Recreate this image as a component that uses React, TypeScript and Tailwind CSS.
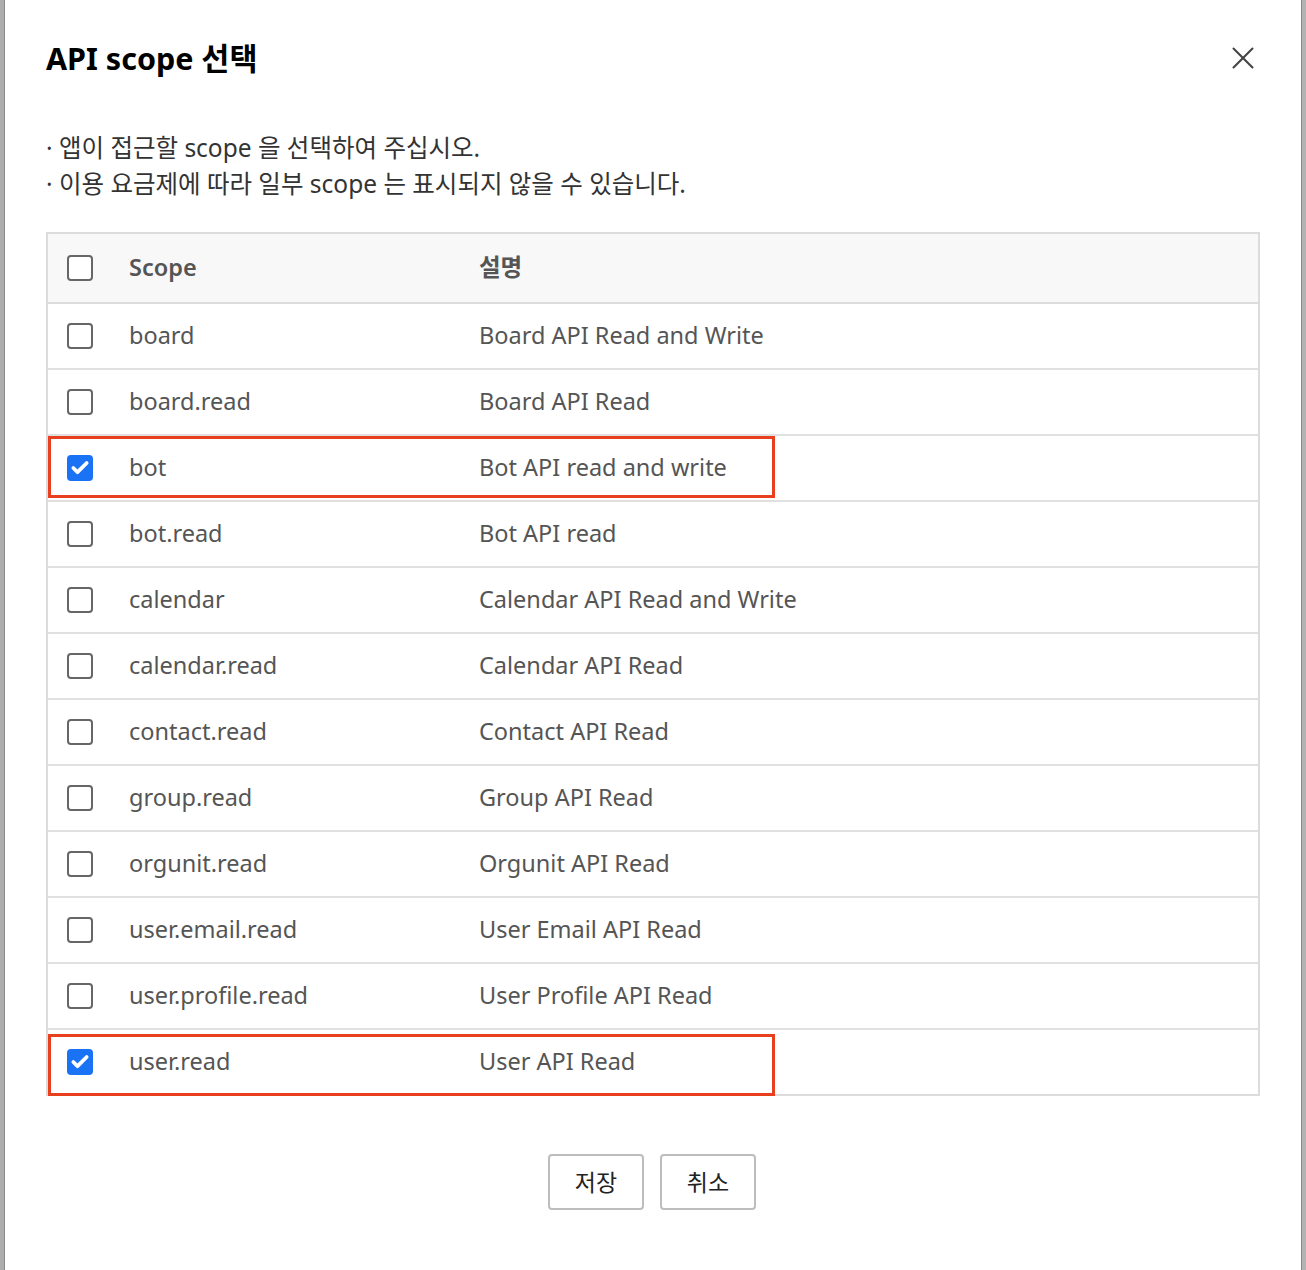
import { X, Check } from "lucide-react"

const scopes = [
  { name: "board", desc: "Board API Read and Write", checked: false },
  { name: "board.read", desc: "Board API Read", checked: false },
  { name: "bot", desc: "Bot API read and write", checked: true },
  { name: "bot.read", desc: "Bot API read", checked: false },
  { name: "calendar", desc: "Calendar API Read and Write", checked: false },
  { name: "calendar.read", desc: "Calendar API Read", checked: false },
  { name: "contact.read", desc: "Contact API Read", checked: false },
  { name: "group.read", desc: "Group API Read", checked: false },
  { name: "orgunit.read", desc: "Orgunit API Read", checked: false },
  { name: "user.email.read", desc: "User Email API Read", checked: false },
  { name: "user.profile.read", desc: "User Profile API Read", checked: false },
  { name: "user.read", desc: "User API Read", checked: true },
]

function Box({ checked }: { checked: boolean }) {
  if (checked) {
    return (
      <div className="flex h-[26px] w-[26px] items-center justify-center rounded-[4px] bg-[#1a73f5]">
        <Check className="h-[20px] w-[20px] text-white" strokeWidth={4.5} />
      </div>
    )
  }
  return <div className="h-[26px] w-[26px] rounded-[4px] border-2 border-[#666] bg-white" />
}

export default function App() {
  return (
    <div
      className="flex h-[1270px] w-[1306px] bg-white"
      style={{ fontFamily: '"Noto Sans", "Noto Sans CJK KR", sans-serif' }}
    >
      {/* left backdrop strip */}
      <div className="w-[4px] shrink-0 bg-[#adadad]" />
      <div className="w-px shrink-0 bg-[#8a8a8a]" />

      {/* modal */}
      <div className="flex-1 px-[41px] pt-[34px]">
        <div className="flex items-start justify-between">
          <h1 className="text-[30.5px] font-bold leading-[48px] text-black">API scope 선택</h1>
          <button className="mr-[-2px] mt-[5px] text-[#444]">
            <X className="h-[38px] w-[38px]" strokeWidth={1.3} />
          </button>
        </div>

        <ul className="mt-[48px] text-[24.5px] leading-[36px] text-[#333]">
          <li>· 앱이 접근할 scope 을 선택하여 주십시오.</li>
          <li>· 이용 요금제에 따라 일부 scope 는 표시되지 않을 수 있습니다.</li>
        </ul>

        <div className="mt-[30px] w-[1214px] border-2 border-[#dcdcdc]">
          <div className="flex h-[70px] items-center border-b-2 border-[#dcdcdc] bg-[#f8f8f8] text-[23.5px] font-semibold text-[#555]">
            <div className="w-[81px] pl-[19px]">
              <Box checked={false} />
            </div>
            <div className="w-[350px]">Scope</div>
            <div>설명</div>
          </div>
          {scopes.map((s, i) => {
            const last = i === scopes.length - 1
            return (
              <div
                key={s.name}
                className={
                  "relative flex items-center text-[23.5px] text-[#555] " +
                  (last ? "h-[64px]" : "h-[66px] border-b-2 border-[#e0e0e0]")
                }
              >
                <div className="w-[81px] pl-[19px]">
                  <Box checked={s.checked} />
                </div>
                <div className="w-[350px]">{s.name}</div>
                <div>{s.desc}</div>
                {s.checked && (
                  <div
                    className={
                      "absolute left-0 h-[62px] w-[727px] border-[3px] border-[#e8401f] " +
                      (last ? "top-[4px]" : "top-0")
                    }
                  />
                )}
              </div>
            )
          })}
        </div>

        <div className="mt-[58px] flex justify-center gap-4 pr-[2px]">
          <button className="h-[56px] w-[96px] rounded-[4px] border-2 border-[#bdbdbd] bg-white text-[23px] text-[#222]">
            저장
          </button>
          <button className="h-[56px] w-[96px] rounded-[4px] border-2 border-[#bdbdbd] bg-white text-[23px] text-[#222]">
            취소
          </button>
        </div>
      </div>

      {/* right backdrop strip */}
      <div className="w-px shrink-0 bg-[#8a8a8a]" />
      <div className="w-[4px] shrink-0 bg-[#b3b3b3]" />
    </div>
  )
}
